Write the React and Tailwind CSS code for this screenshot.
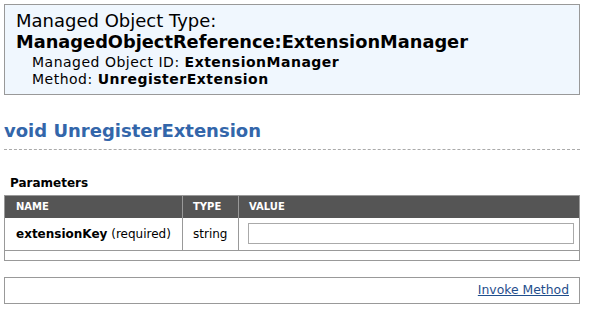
export default function App() {
  return (
    <div className="w-[589px] h-[320px] bg-white px-[4px] pt-[4px] text-black" style={{ fontFamily: '"DejaVu Sans", Verdana, sans-serif' }}>
      {/* Object header */}
      <div className="w-[576px] h-[91px] border border-[#999] bg-[#f0f7fe] pl-[11px] pt-[5px]">
        <div className="text-[18px] leading-[21px]">Managed Object Type:</div>
        <div className="text-[17.8px] leading-[21px] font-bold">ManagedObjectReference:ExtensionManager</div>
        <div className="mt-[2px] pl-[16px] text-[14px] leading-[16.5px] tracking-[0.5px]">
          <div>
            Managed Object ID: <span className="font-bold">ExtensionManager</span>
          </div>
          <div>
            Method: <span className="font-bold">UnregisterExtension</span>
          </div>
        </div>
      </div>

      {/* Method title */}
      <h2 className="mt-[24px] w-[576px] border-b border-dashed border-[#aaa] pb-[6px] text-[18px] leading-[24px] font-bold text-[#3366aa]">
        void UnregisterExtension
      </h2>

      <div className="mt-[25px] pl-[6px] text-[12px] leading-[16px] font-bold">Parameters</div>

      {/* Parameters table */}
      <table className="mt-[4px] w-[576px] border-collapse border border-[#999] text-[12px]">
        <thead>
          <tr className="bg-[#555] text-white text-[10px] font-bold text-left h-[22px]">
            <th className="pl-[11px] border-r border-[#999]">NAME</th>
            <th className="pl-[10px] w-[56px] border-r border-[#999]">TYPE</th>
            <th className="pl-[10px]">VALUE</th>
          </tr>
        </thead>
        <tbody>
          <tr className="h-[33px]">
            <td className="pl-[11px] w-[178px] border-r border-b border-[#999]">
              <span className="font-bold">extensionKey</span> (required)
            </td>
            <td className="pl-[10px] border-r border-b border-[#999]">string</td>
            <td className="pl-[9px] border-b border-[#999]">
              <div className="w-[326px] h-[21px] border border-[#aaa] bg-white"></div>
            </td>
          </tr>
          <tr className="h-[10px]">
            <td colSpan={3}></td>
          </tr>
        </tbody>
      </table>

      {/* Invoke */}
      <div className="mt-[16px] w-[576px] h-[27px] border border-[#999] flex items-center justify-end pr-[10px]">
        <a href="#" className="text-[12.4px] text-[#1f4e8c] underline">Invoke Method</a>
      </div>
    </div>
  );
}
